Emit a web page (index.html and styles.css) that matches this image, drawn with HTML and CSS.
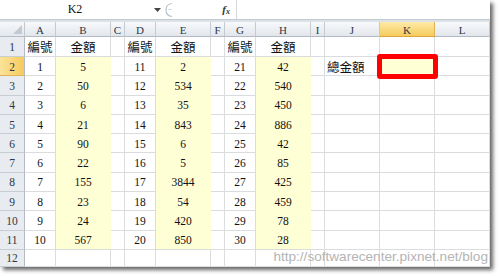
FILE: index.html
```html
<!DOCTYPE html>
<html>
<head>
<meta charset="utf-8">
<link rel="stylesheet" href="styles.css">
</head>
<body>
<div class="window">
  <div class="fbar">
    <div class="namebox">K2</div>
    <div class="nbarrow"><svg width="7" height="4" viewBox="0 0 7 4"><path d="M0 0h7L3.5 4z" fill="#444"/></svg></div>
    <div class="handle"><svg width="12" height="16" viewBox="0 0 12 16"><path d="M8 1.5C3.5 2 2 5 2 8s1.5 6 6 6.5" fill="none" stroke="#b9c2cc" stroke-width="1.2"/><path d="M4.5 7.5h3" stroke="#c9d0d8" stroke-width="1"/></svg></div>
    <div class="fxwrap"><span class="fx">f<sub>x</sub></span></div>
    <div class="formula"></div>
  </div>
  <div class="band"></div>
  <div class="sheet">
    <div class="corner"><svg width="9" height="9" viewBox="0 0 9 9"><path d="M9 0V9H0z" fill="#c3c9d1"/></svg></div>
    <div class="ch">A</div><div class="ch">B</div><div class="ch">C</div><div class="ch">D</div><div class="ch">E</div><div class="ch">F</div><div class="ch">G</div><div class="ch">H</div><div class="ch">I</div><div class="ch">J</div><div class="ch sel">K</div><div class="ch">L</div>

    <div class="rh">1</div>
    <div class="c cjk">編號</div><div class="c cjk">金額</div><div class="c"></div><div class="c cjk">編號</div><div class="c cjk">金額</div><div class="c"></div><div class="c cjk">編號</div><div class="c cjk">金額</div><div class="c"></div><div class="c"></div><div class="c"></div><div class="c"></div>

    <div class="rh rsel">2</div>
    <div class="c">1</div><div class="c y">5</div><div class="c"></div><div class="c">11</div><div class="c y">2</div><div class="c"></div><div class="c">21</div><div class="c y">42</div><div class="c"></div><div class="c cjk left">總金額</div><div class="c y k2"></div><div class="c"></div>

    <div class="rh">3</div>
    <div class="c">2</div><div class="c y">50</div><div class="c"></div><div class="c">12</div><div class="c y">534</div><div class="c"></div><div class="c">22</div><div class="c y">540</div><div class="c"></div><div class="c"></div><div class="c"></div><div class="c"></div>

    <div class="rh">4</div>
    <div class="c">3</div><div class="c y">6</div><div class="c"></div><div class="c">13</div><div class="c y">35</div><div class="c"></div><div class="c">23</div><div class="c y">450</div><div class="c"></div><div class="c"></div><div class="c"></div><div class="c"></div>

    <div class="rh">5</div>
    <div class="c">4</div><div class="c y">21</div><div class="c"></div><div class="c">14</div><div class="c y">843</div><div class="c"></div><div class="c">24</div><div class="c y">886</div><div class="c"></div><div class="c"></div><div class="c"></div><div class="c"></div>

    <div class="rh">6</div>
    <div class="c">5</div><div class="c y">90</div><div class="c"></div><div class="c">15</div><div class="c y">6</div><div class="c"></div><div class="c">25</div><div class="c y">42</div><div class="c"></div><div class="c"></div><div class="c"></div><div class="c"></div>

    <div class="rh">7</div>
    <div class="c">6</div><div class="c y">22</div><div class="c"></div><div class="c">16</div><div class="c y">5</div><div class="c"></div><div class="c">26</div><div class="c y">85</div><div class="c"></div><div class="c"></div><div class="c"></div><div class="c"></div>

    <div class="rh">8</div>
    <div class="c">7</div><div class="c y">155</div><div class="c"></div><div class="c">17</div><div class="c y">3844</div><div class="c"></div><div class="c">27</div><div class="c y">425</div><div class="c"></div><div class="c"></div><div class="c"></div><div class="c"></div>

    <div class="rh">9</div>
    <div class="c">8</div><div class="c y">23</div><div class="c"></div><div class="c">18</div><div class="c y">54</div><div class="c"></div><div class="c">28</div><div class="c y">459</div><div class="c"></div><div class="c"></div><div class="c"></div><div class="c"></div>

    <div class="rh">10</div>
    <div class="c">9</div><div class="c y">24</div><div class="c"></div><div class="c">19</div><div class="c y">420</div><div class="c"></div><div class="c">29</div><div class="c y">78</div><div class="c"></div><div class="c"></div><div class="c"></div><div class="c"></div>

    <div class="rh">11</div>
    <div class="c">10</div><div class="c y last">567</div><div class="c"></div><div class="c">20</div><div class="c y last">850</div><div class="c"></div><div class="c">30</div><div class="c y last">28</div><div class="c"></div><div class="c"></div><div class="c"></div><div class="c"></div>

    <div class="rh">12</div>
    <div class="c"></div><div class="c"></div><div class="c"></div><div class="c"></div><div class="c"></div><div class="c"></div><div class="c"></div><div class="c"></div><div class="c"></div><div class="c"></div><div class="c"></div><div class="c"></div>
  </div>
  <div class="watermark">http://softwarecenter.pixnet.net/blog</div>
</div>
</body>
</html>
```

FILE: styles.css
```css
* { box-sizing: border-box; }

body {
  margin: 0;
  width: 500px;
  height: 276px;
  overflow: hidden;
  background: #ffffff;
  font-family: "Liberation Serif", "Noto Sans CJK TC", serif;
  color: #111;
}

.window {
  position: relative;
  width: 490px;
  height: 267px;
  background: #ffffff;
  box-shadow: 3px 3px 4px rgba(0, 0, 0, 0.6);
  overflow: hidden;
}

.fbar {
  display: flex;
  align-items: center;
  height: 20px;
  border-bottom: 1px solid #c3c9d1;
  background: #ffffff;
  font-size: 12px;
}

.namebox {
  width: 150px;
  text-align: center;
  line-height: 19px;
}

.nbarrow {
  width: 14px;
  display: flex;
  justify-content: center;
  align-items: center;
}

.handle {
  width: 14px;
  display: flex;
  align-items: center;
}

.fxwrap {
  width: 58px;
  display: flex;
  justify-content: flex-end;
  padding-right: 6px;
}

.fx {
  font-style: italic;
  font-weight: bold;
  font-size: 11px;
  color: #333;
}

.fx sub {
  font-size: 8px;
  vertical-align: -1px;
}

.formula {
  flex: 1;
  height: 19px;
  border-left: 1px solid #d4d9df;
}

.band {
  height: 2px;
  background: #dde2e8;
}

.sheet {
  display: grid;
  grid-template-columns: 25px 31px 55px 14px 31px 55px 14px 31px 55px 14px 55px 55px 55px;
  grid-template-rows: 15px 20px repeat(10, 19.3px) 17px;
  font-size: 11.5px;
}

.sheet > div {
  display: flex;
  align-items: center;
  justify-content: center;
  border-right: 1px solid #dadcdd;
  border-bottom: 1px solid #dadcdd;
  padding-top: 1px;
}

.sheet > .corner {
  background: linear-gradient(#f7f8fa, #e3e7ec);
  border-right: 1px solid #c2c8d0;
  border-bottom: 1px solid #b5bcc5;
  justify-content: flex-end;
  align-items: flex-end;
  padding: 0 2px 2px 0;
}

.sheet > .ch {
  background: linear-gradient(#f8f9fb, #e2e6eb);
  border-right: 1px solid #c5cbd3;
  border-bottom: 1px solid #b3bac4;
  color: #2d3846;
  font-size: 11px;
}

.sheet > .sel {
  background: linear-gradient(#fdeaa8, #f6cb5c);
  border-right: 1px solid #e0b457;
  border-bottom: 1px solid #d9a53c;
}

.sheet > .rh {
  background: #e8ebef;
  border-right: 1px solid #b3bac4;
  border-bottom: 1px solid #c8cdd4;
  color: #2d3846;
  font-size: 11.5px;
}

.sheet > .rsel {
  background: linear-gradient(90deg, #fbe39a, #f6cb5c);
  border-bottom: 1px solid #e0b457;
}

.sheet > .cjk {
  font-family: "Noto Sans CJK TC", sans-serif;
  font-size: 12.5px;
  padding-top: 0;
}

.sheet > .left {
  justify-content: flex-start;
  padding-left: 2px;
}

.sheet > .y {
  background: #ffffd6;
  border-right-color: #ffffd6;
  border-bottom-color: #ffffd6;
}

.sheet > .y.last {
  border-bottom-color: #dadcdd;
}

.sheet > .k2 {
  position: relative;
}

.k2::after {
  content: "";
  position: absolute;
  left: -3px;
  top: -3px;
  right: -4px;
  bottom: -4px;
  border: 5px solid #ff0000;
  border-radius: 3px;
}

.watermark {
  position: absolute;
  right: 2px;
  bottom: 3px;
  font-family: "Liberation Sans", Arial, sans-serif;
  font-size: 13.6px;
  color: #b4b4b4;
}
```
